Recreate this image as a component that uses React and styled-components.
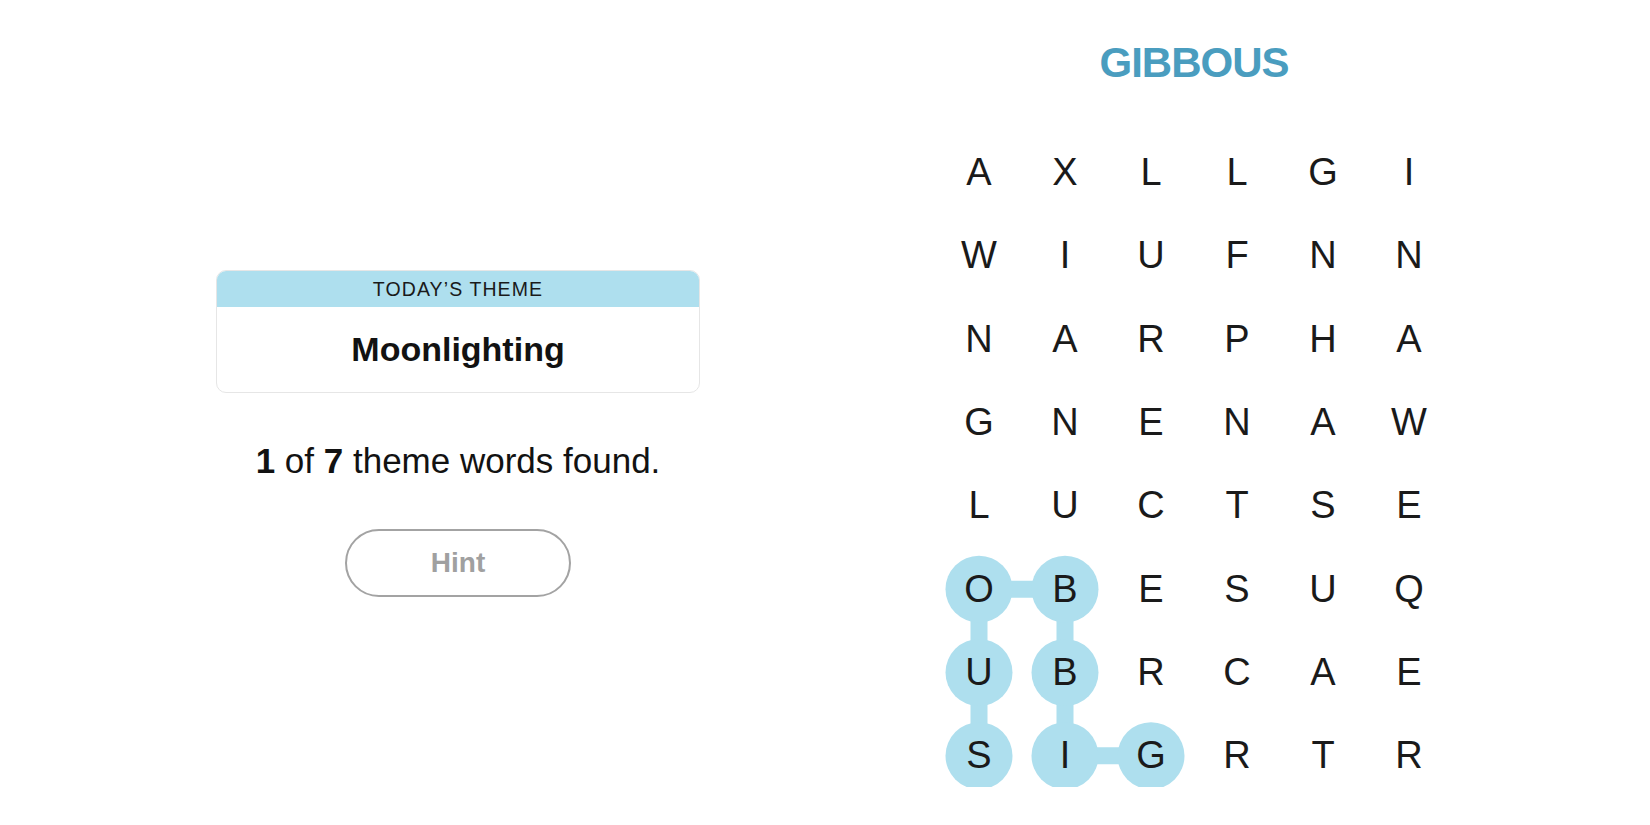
import React from 'react';
import styled, { createGlobalStyle } from 'styled-components';

const GlobalStyle = createGlobalStyle`
body{
margin:0;
background:#ffffff;
font-family:"Liberation Sans", Arial, sans-serif;
color:#121212;
}
`;

const grid = [
  'AXLLGI',
  'WIUFNN',
  'NARPHA',
  'GNENAW',
  'LUCTSE',
  'OBESUQ',
  'UBRCAE',
  'SIGRTR',
];

// found word path, [row, col]
const found = [[7, 2], [7, 1], [6, 1], [5, 1], [5, 0], [6, 0], [7, 0]];

const CELL_W = 86;
const CELL_H = 83.3;

const Page = styled.div`
display:flex;
flex-direction:row;
width:1650px;
height:825px;
overflow:hidden;
`;
const LeftPanel = styled.div`
display:flex;
flex-direction:column;
align-items:center;
width:916px;
padding-top:270px;
box-sizing:border-box;
`;
const ThemeCard = styled.div`
width:484px;
border:1px solid #e6e6e6;
border-radius:10px;
overflow:hidden;
box-sizing:border-box;
`;
const ThemeHeader = styled.div`
background:#aedfee;
height:36px;
display:flex;
align-items:center;
justify-content:center;
font-size:19.5px;
letter-spacing:1.1px;
color:#1a1a1a;
`;
const ThemeBody = styled.div`
height:85px;
display:flex;
align-items:center;
justify-content:center;
font-size:34px;
font-weight:700;
color:#121212;
`;
const Progress = styled.div`
margin-top:48px;
font-size:35px;
line-height:40px;
color:#121212;
b{
  font-weight:700;
}
`;
const HintButton = styled.button`
margin-top:48px;
width:226px;
height:68px;
border:2.5px solid #a3a3a3;
border-radius:34px;
background:white;
font-family:inherit;
font-size:28px;
font-weight:700;
color:#a0a0a0;
cursor:pointer;
`;
const RightPanel = styled.div`
display:flex;
flex-direction:column;
align-items:center;
width:556px;
padding-top:42px;
box-sizing:border-box;
`;
const Title = styled.h1`
margin:0;
font-size:42px;
line-height:42px;
font-weight:700;
letter-spacing:-1px;
color:#4a9dbf;
`;
const BoardClip = styled.div`
margin-top:47px;
height:656px;
overflow:hidden;
`;
const Board = styled.div`
position:relative;
display:grid;
grid-template-columns:repeat(6, ${CELL_W}px);
grid-auto-rows:${CELL_H}px;
`;
const Trail = styled.svg`
position:absolute;
left:0;
top:0;
pointer-events:none;
`;
const Letter = styled.div`
position:relative;
display:flex;
align-items:center;
justify-content:center;
font-size:38px;
color:#1a1a1a;
`;

const cx = (c) => c * CELL_W + CELL_W / 2;
const cy = (r) => r * CELL_H + CELL_H / 2;

const FoundTrail = () => (
  <Trail width={CELL_W * 6} height={CELL_H * 8}>
    <polyline
      points={found.map(([r, c]) => `${cx(c)},${cy(r)}`).join(' ')}
      fill="none"
      stroke="#aedfee"
      strokeWidth="17"
      strokeLinejoin="round"
    />
    {found.map(([r, c]) => (
      <circle key={`${r}-${c}`} cx={cx(c)} cy={cy(r)} r="33.5" fill="#aedfee" />
    ))}
  </Trail>
);

export default function App() {
  return (
    <>
      <GlobalStyle />
      <Page>
        <LeftPanel>
          <ThemeCard>
            <ThemeHeader>TODAY’S THEME</ThemeHeader>
            <ThemeBody>Moonlighting</ThemeBody>
          </ThemeCard>
          <Progress>
            <b>1</b> of <b>7</b> theme words found.
          </Progress>
          <HintButton>Hint</HintButton>
        </LeftPanel>
        <RightPanel>
          <Title>GIBBOUS</Title>
          <BoardClip>
            <Board>
              <FoundTrail />
              {grid.map((row, r) =>
                row.split('').map((ch, c) => <Letter key={`${r}-${c}`}>{ch}</Letter>)
              )}
            </Board>
          </BoardClip>
        </RightPanel>
      </Page>
    </>
  );
}
